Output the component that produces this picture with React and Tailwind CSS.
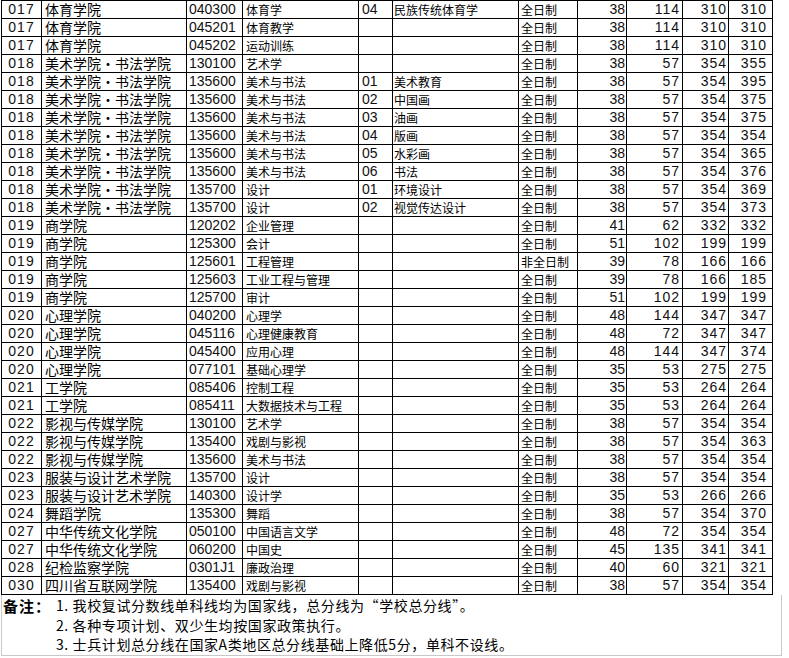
import React from "react";

const rows = [
  ["017", "体育学院", "040300", "体育学", "04", "民族传统体育学", "全日制", "38", "114", "310", "310"],
  ["017", "体育学院", "045201", "体育教学", "", "", "全日制", "38", "114", "310", "310"],
  ["017", "体育学院", "045202", "运动训练", "", "", "全日制", "38", "114", "310", "310"],
  ["018", "美术学院•书法学院", "130100", "艺术学", "", "", "全日制", "38", "57", "354", "355"],
  ["018", "美术学院•书法学院", "135600", "美术与书法", "01", "美术教育", "全日制", "38", "57", "354", "395"],
  ["018", "美术学院•书法学院", "135600", "美术与书法", "02", "中国画", "全日制", "38", "57", "354", "375"],
  ["018", "美术学院•书法学院", "135600", "美术与书法", "03", "油画", "全日制", "38", "57", "354", "375"],
  ["018", "美术学院•书法学院", "135600", "美术与书法", "04", "版画", "全日制", "38", "57", "354", "354"],
  ["018", "美术学院•书法学院", "135600", "美术与书法", "05", "水彩画", "全日制", "38", "57", "354", "365"],
  ["018", "美术学院•书法学院", "135600", "美术与书法", "06", "书法", "全日制", "38", "57", "354", "376"],
  ["018", "美术学院•书法学院", "135700", "设计", "01", "环境设计", "全日制", "38", "57", "354", "369"],
  ["018", "美术学院•书法学院", "135700", "设计", "02", "视觉传达设计", "全日制", "38", "57", "354", "373"],
  ["019", "商学院", "120202", "企业管理", "", "", "全日制", "41", "62", "332", "332"],
  ["019", "商学院", "125300", "会计", "", "", "全日制", "51", "102", "199", "199"],
  ["019", "商学院", "125601", "工程管理", "", "", "非全日制", "39", "78", "166", "166"],
  ["019", "商学院", "125603", "工业工程与管理", "", "", "全日制", "39", "78", "166", "185"],
  ["019", "商学院", "125700", "审计", "", "", "全日制", "51", "102", "199", "199"],
  ["020", "心理学院", "040200", "心理学", "", "", "全日制", "48", "144", "347", "347"],
  ["020", "心理学院", "045116", "心理健康教育", "", "", "全日制", "48", "72", "347", "347"],
  ["020", "心理学院", "045400", "应用心理", "", "", "全日制", "48", "144", "347", "374"],
  ["020", "心理学院", "077101", "基础心理学", "", "", "全日制", "35", "53", "275", "275"],
  ["021", "工学院", "085406", "控制工程", "", "", "全日制", "35", "53", "264", "264"],
  ["021", "工学院", "085411", "大数据技术与工程", "", "", "全日制", "35", "53", "264", "264"],
  ["022", "影视与传媒学院", "130100", "艺术学", "", "", "全日制", "38", "57", "354", "354"],
  ["022", "影视与传媒学院", "135400", "戏剧与影视", "", "", "全日制", "38", "57", "354", "363"],
  ["022", "影视与传媒学院", "135600", "美术与书法", "", "", "全日制", "38", "57", "354", "354"],
  ["023", "服装与设计艺术学院", "135700", "设计", "", "", "全日制", "38", "57", "354", "354"],
  ["023", "服装与设计艺术学院", "140300", "设计学", "", "", "全日制", "35", "53", "266", "266"],
  ["024", "舞蹈学院", "135300", "舞蹈", "", "", "全日制", "38", "57", "354", "370"],
  ["027", "中华传统文化学院", "050100", "中国语言文学", "", "", "全日制", "48", "72", "354", "354"],
  ["027", "中华传统文化学院", "060200", "中国史", "", "", "全日制", "45", "135", "341", "341"],
  ["028", "纪检监察学院", "0301J1", "廉政治理", "", "", "全日制", "40", "60", "321", "321"],
  ["030", "四川省互联网学院", "135400", "戏剧与影视", "", "", "全日制", "38", "57", "354", "354"],
];

const cjk = "font-['Noto_Sans_CJK_SC',sans-serif]";
const num = "font-['Liberation_Sans','Noto_Sans_CJK_SC',sans-serif] text-[14px] text-[#111]";
const cell = "border border-black h-[18px] p-0 align-bottom leading-[17px] whitespace-nowrap overflow-hidden";

const App = () => {
  return (
    <div className="w-[789px] h-[658px] bg-white text-black overflow-hidden">
      <table className="ml-px table-fixed border-collapse w-[772px]">
        <colgroup>
          <col className="w-[40px]" />
          <col className="w-[145px]" />
          <col className="w-[56px]" />
          <col className="w-[116px]" />
          <col className="w-[34px]" />
          <col className="w-[126px]" />
          <col className="w-[59px]" />
          <col className="w-[49px]" />
          <col className="w-[56px]" />
          <col className="w-[46px]" />
          <col className="w-[44px]" />
        </colgroup>
        <tbody>
          {rows.map((r, i) => (
            <tr key={i}>
              <td className={`${cell} ${num} text-center tracking-[1px]`}>{r[0]}</td>
              <td className={`${cell} ${cjk} text-[14px] pl-[3px]`}>{r[1]}</td>
              <td className={`${cell} ${num} pl-[2px]`}>{r[2]}</td>
              <td className={`${cell} ${cjk} text-[12px] pl-[3px]`}>{r[3]}</td>
              <td className={`${cell} ${num} pl-[3px]`}>{r[4]}</td>
              <td className={`${cell} ${cjk} text-[12px] pl-px`}>{r[5]}</td>
              <td className={`${cell} ${cjk} text-[12px] pl-[2px]`}>{r[6]}</td>
              <td className={`${cell} ${num} text-right pr-px`}>{r[7]}</td>
              <td className={`${cell} ${num} text-right pr-[2px] tracking-[1px]`}>{r[8]}</td>
              <td className={`${cell} ${num} text-right pr-px tracking-[1px]`}>{r[9]}</td>
              <td className={`${cell} ${num} text-right pr-[5px] tracking-[1px]`}>{r[10]}</td>
            </tr>
          ))}
        </tbody>
      </table>

      {/* 备注 */}
      <div className={`ml-px w-[781px] h-[61px] border-l border-r border-b border-[#c8c8c8] flex ${cjk} text-[14px] tracking-[0.6px] leading-[19.5px] pt-px`}>
        <div className="w-[54px] shrink-0 pl-px font-bold text-[15px] tracking-[1px]">备注：</div>
        <div className="flex flex-col">
          <p>1. 我校复试分数线单科线均为国家线，总分线为“学校总分线”。</p>
          <p>2. 各种专项计划、双少生均按国家政策执行。</p>
          <p>3. 士兵计划总分线在国家A类地区总分线基础上降低5分，单科不设线。</p>
        </div>
      </div>
    </div>
  );
};

export default App;
